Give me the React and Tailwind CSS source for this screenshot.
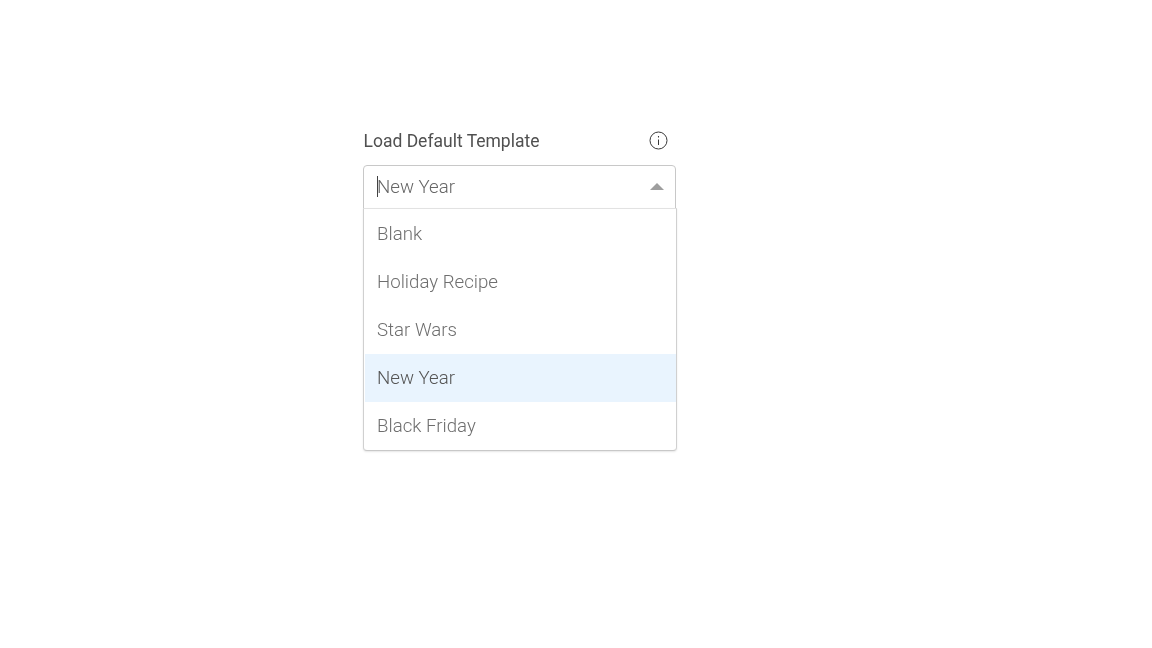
import React from 'react';

const options = ['Blank', 'Holiday Recipe', 'Star Wars', 'New Year', 'Black Friday'];

export default function App() {
  return (
    <div className="min-h-[648px] bg-white pt-[129px] pl-[363px] font-['Roboto',sans-serif]">
      <div className="w-[313px] will-change-transform">
        {/* Label row */}
        <div className="flex h-[24px] items-center justify-between pl-[0.5px] pr-[8px]">
          <span className="text-[17.5px] text-[#505050]">Load Default Template</span>
          <svg width="20" height="20" viewBox="0 0 20 20" fill="none" stroke="#383838" className="translate-x-[0.5px] -translate-y-[0.5px]">
            <circle cx="10" cy="10" r="8.5" strokeWidth="1" />
            <path d="M10 9v5.5" strokeWidth="1" />
            <path d="M10 5.6v1.4" strokeWidth="1.1" />
          </svg>
        </div>

        {/* Select */}
        <div className="relative mt-[12px]">
          <div className="flex h-[44px] items-center justify-between rounded-t-[4px] border border-[#c8c8c8] pl-[13px] pr-[11px]">
            <div className="flex items-center">
              <span className="h-[21px] w-px -translate-y-px bg-[#424242]" />
              <span className="-ml-px text-[18.67px] font-light text-[#666666]">New Year</span>
            </div>
            <svg width="14" height="7" viewBox="0 0 14 7" fill="#9e9e9e" className="-translate-y-px">
              <path d="M7 0l7 7H0z" />
            </svg>
          </div>

          {/* Menu */}
          <div className="absolute left-0 top-[43px] w-[314px] rounded-b-[4px] border border-[#d0d0d0] border-t-[#e2e2e2] border-b-[#c8c8c8] bg-white pl-px pt-px shadow-[0_1px_2px_rgba(0,0,0,0.1)]">
            {options.map((opt) => (
              <div
                key={opt}
                className={`flex h-[48px] items-center pl-[12px] text-[18.67px] font-light ${opt === 'New Year' ? 'bg-[#e9f4fe] text-[#555555]' : 'text-[#6e6e6e]'}`}
              >
                {opt}
              </div>
            ))}
          </div>
        </div>
      </div>
    </div>
  );
}
